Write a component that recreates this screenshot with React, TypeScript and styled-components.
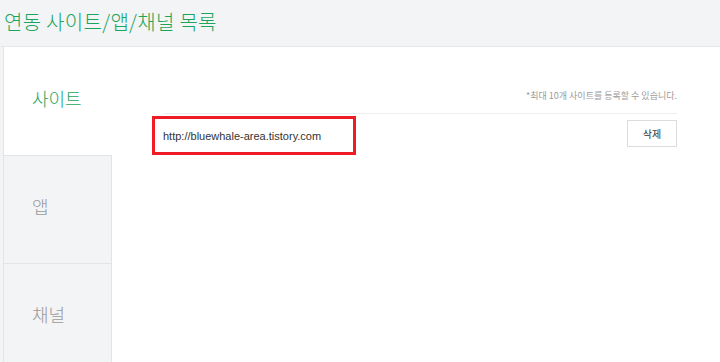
import styled, { createGlobalStyle } from "styled-components";

const GlobalStyle = createGlobalStyle`
  html, body {
    margin: 0;
    padding: 0;
    background: #f3f4f6;
    font-family: "Noto Sans CJK KR", "Noto Sans", sans-serif;
  }
`;

const Page = styled.div`
  width: 720px;
  height: 362px;
  overflow: hidden;
  display: flex;
  flex-direction: column;
`;

const Header = styled.header`
  flex-shrink: 0;
  height: 46px;
  display: flex;
  align-items: center;
  padding-left: 4px;
  border-bottom: 1px solid #e6e7e9;
`;

const Title = styled.h1`
  margin: 0;
  font-size: 20px;
  font-weight: 300;
  color: #1ba55b;
  letter-spacing: 0.3px;
  padding-bottom: 3px;
`;

const Card = styled.section`
  flex: 1;
  min-height: 0;
  margin-left: 3px;
  background: #fff;
  border-left: 1px solid #e3e4e6;
  display: flex;
`;

const Tabs = styled.nav`
  width: 108px;
  display: flex;
  flex-direction: column;
`;

const Tab = styled.div<{ $active?: boolean }>`
  height: 108px;
  flex-shrink: 0;
  box-sizing: border-box;
  display: flex;
  align-items: center;
  padding-left: 28px;
  padding-bottom: 8px;
  font-size: 18px;
  font-weight: 300;
  color: ${(p) => (p.$active ? "#1ba55b" : "#9a9a9a")};
  background: ${(p) => (p.$active ? "#fff" : "#f3f4f6")};
  border-right: 1px solid ${(p) => (p.$active ? "transparent" : "#e3e4e6")};
  border-top: 1px solid ${(p) => (p.$active ? "transparent" : "#e3e4e6")};
`;

const Content = styled.div`
  flex: 1;
  padding: 40px 43px 0 52px;
`;

const Note = styled.p`
  margin: 0;
  text-align: right;
  font-size: 9px;
  color: #9b9b9b;
  height: 26px;
  line-height: 18px;
  border-bottom: 1px solid #eeeeee;
`;

const Row = styled.div`
  display: flex;
  align-items: center;
  justify-content: space-between;
  height: 42px;
`;

const Url = styled.div`
  margin-left: -12px;
  width: 190px;
  height: 33px;
  border: 3px solid #ee1c25;
  display: flex;
  align-items: center;
  padding-left: 8px;
  font-family: "Liberation Sans", Arial, sans-serif;
  font-size: 11px;
  color: #333;
  margin-top: 1px;
`;

const DeleteButton = styled.button`
  width: 50px;
  height: 27px;
  background: #fff;
  border: 1px solid #dcdcdc;
  font-family: "Noto Sans CJK KR", sans-serif;
  font-size: 10px;
  color: #333;
  padding: 0;
  margin-top: -3px;
`;

export default function App() {
  return (
    <>
      <GlobalStyle />
      <Page>
        <Header>
          <Title>연동 사이트/앱/채널 목록</Title>
        </Header>
        <Card>
          <Tabs>
            <Tab $active>사이트</Tab>
            <Tab>앱</Tab>
            <Tab>채널</Tab>
          </Tabs>
          <Content>
            <Note>*최대 10개 사이트를 등록할 수 있습니다.</Note>
            <Row>
              <Url>http://bluewhale-area.tistory.com</Url>
              <DeleteButton>삭제</DeleteButton>
            </Row>
          </Content>
        </Card>
      </Page>
    </>
  );
}
